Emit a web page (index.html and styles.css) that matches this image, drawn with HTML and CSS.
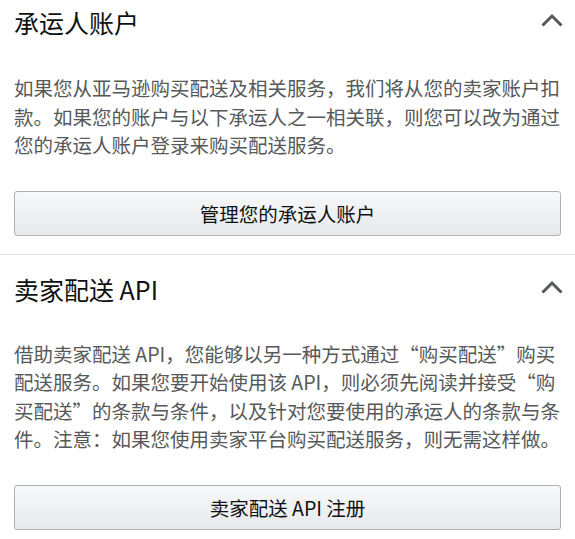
FILE: index.html
```html
<!DOCTYPE html>
<html lang="zh-CN">
<head>
<meta charset="utf-8">
<link rel="stylesheet" href="styles.css">
</head>
<body>
<section class="panel panel-first">
  <div class="panel-head">
    <h2 class="panel-title">承运人账户</h2>
    <svg class="chevron" width="22" height="14" viewBox="0 0 22 14"><path d="M1.5 12.5 L11 3 L20.5 12.5" fill="none" stroke="#565959" stroke-width="3"/></svg>
  </div>
  <p class="panel-text">如果您从亚马逊购买配送及相关服务，我们将从您的卖家账户扣款。如果您的账户与以下承运人之一相关联，则您可以改为通过您的承运人账户登录来购买配送服务。</p>
  <button class="btn">管理您的承运人账户</button>
</section>
<section class="panel panel-second">
  <div class="panel-head">
    <h2 class="panel-title">卖家配送 API</h2>
    <svg class="chevron" width="22" height="14" viewBox="0 0 22 14"><path d="M1.5 12.5 L11 3 L20.5 12.5" fill="none" stroke="#565959" stroke-width="3"/></svg>
  </div>
  <p class="panel-text">借助卖家配送 API，您能够以另一种方式通过<span class="q">“</span>购买配送<span class="q">”</span>购买配送服务。如果您要开始使用该 API，则必须先阅读并接受<span class="q">“</span>购买配送<span class="q">”</span>的条款与条件，以及针对您要使用的承运人的条款与条件。注意：如果您使用卖家平台购买配送服务，则无需这样做。</p>
  <button class="btn">卖家配送 API 注册</button>
</section>
</body>
</html>
```
FILE: styles.css
```css
html, body {
  margin: 0;
  padding: 0;
  background: #ffffff;
}
body {
  font-family: "Noto Sans CJK SC", "Noto Sans", sans-serif;
  color: #0f1111;
  width: 575px;
}
.panel {
  padding: 0 14px;
}
.panel-first {
  padding-top: 6px;
  padding-bottom: 18px;
  border-bottom: 1px solid #e3e6e6;
}
.panel-second {
  padding-top: 18px;
}
.panel-head {
  display: flex;
  align-items: center;
  justify-content: space-between;
  height: 32px;
}
.panel-title {
  margin: 0;
  font-size: 25px;
  font-weight: 400;
  line-height: 32px;
  color: #0f1111;
}
.chevron {
  display: block;
  margin-right: -2px;
  margin-top: -4px;
}
.panel-text {
  margin: 36px 0 0;
  font-size: 19.5px;
  line-height: 28.5px;
  color: #565959;
}
.panel-second .panel-text {
  margin-top: 35px;
}
.q {
  font-feature-settings: "fwid" 1;
}
.btn {
  display: block;
  width: 100%;
  height: 45px;
  margin-top: 31px;
  padding: 0;
  border: 1px solid #adb1b8;
  border-radius: 3px;
  background: linear-gradient(to bottom, #f7f8fa, #e7e9ec);
  font-family: "Noto Sans CJK SC", "Noto Sans", sans-serif;
  font-size: 19.5px;
  color: #0f1111;
  line-height: 43px;
}
```
